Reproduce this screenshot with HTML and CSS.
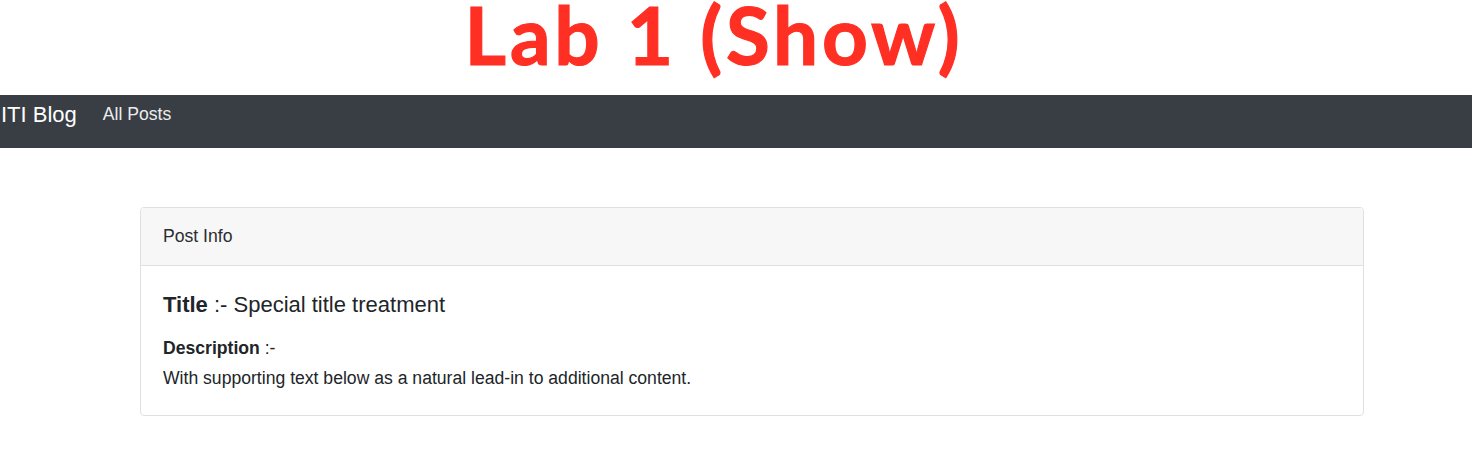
FILE: index.html
```html
<!DOCTYPE html>
<html lang="en">
<head>
<meta charset="utf-8">
<title>Lab 1 (Show)</title>
<link rel="stylesheet" href="styles.css">
</head>
<body>
  <header class="slide-title">
    <h1 class="slide-title__text">Lab 1 (Show)</h1>
  </header>
  <nav class="navbar">
    <a class="navbar__brand" href="#">ITI Blog</a>
    <a class="navbar__link" href="#">All Posts</a>
  </nav>
  <main class="page">
    <section class="card">
      <div class="card__header">Post Info</div>
      <div class="card__body">
        <h5 class="card__title"><b>Title</b> :- Special title treatment</h5>
        <div class="card__label"><b>Description</b> :-</div>
        <p class="card__text">With supporting text below as a natural lead-in to additional content.</p>
      </div>
    </section>
  </main>
</body>
</html>
```

FILE: styles.css
```css
* {
  box-sizing: border-box;
}

html, body {
  margin: 0;
  padding: 0;
  background: #ffffff;
}

body {
  font-family: "Liberation Sans", Arial, sans-serif;
  color: #212529;
  width: 1472px;
  height: 456px;
  overflow: hidden;
}

.slide-title {
  height: 95px;
  display: flex;
  justify-content: center;
  align-items: flex-start;
  padding-right: 44px;
  padding-top: 1px;
}

.slide-title__text {
  margin: 0;
  font-family: Lato, "Open Sans", sans-serif;
  font-weight: 700;
  font-size: 80px;
  line-height: 66px;
  letter-spacing: 3.8px;
  color: #ff2f23;
  -webkit-text-stroke: 1.2px #ff2f23;
}

.navbar {
  height: 53px;
  background: #393d44;
  display: flex;
  align-items: center;
  padding-left: 1px;
  padding-bottom: 14px;
}

.navbar__brand {
  font-size: 22px;
  color: #ffffff;
  text-decoration: none;
  margin-right: 26px;
}

.navbar__link {
  font-size: 17.6px;
  color: #ececec;
  text-decoration: none;
  margin-top: -1px;
}

.page {
  padding-top: 59px;
  padding-left: 140px;
}

.card {
  width: 1224px;
  border: 1px solid #e0e0e0;
  border-radius: 4px;
  overflow: hidden;
}

.card__header {
  background: #f7f7f7;
  border-bottom: 1px solid #e0e0e0;
  font-size: 17.6px;
  line-height: 26.4px;
  padding: 14.5px 22px 16.5px;
  color: #2a2d31;
}

.card__body {
  padding: 26px 22px 24px;
}

.card__title {
  margin: 0 0 16px;
  font-size: 22px;
  line-height: 26.4px;
  font-weight: 400;
}

.card__label {
  font-size: 17.6px;
  line-height: 26.4px;
  margin-bottom: 3.5px;
}

.card__text {
  margin: 0;
  font-size: 17.6px;
  line-height: 26.4px;
}
```
